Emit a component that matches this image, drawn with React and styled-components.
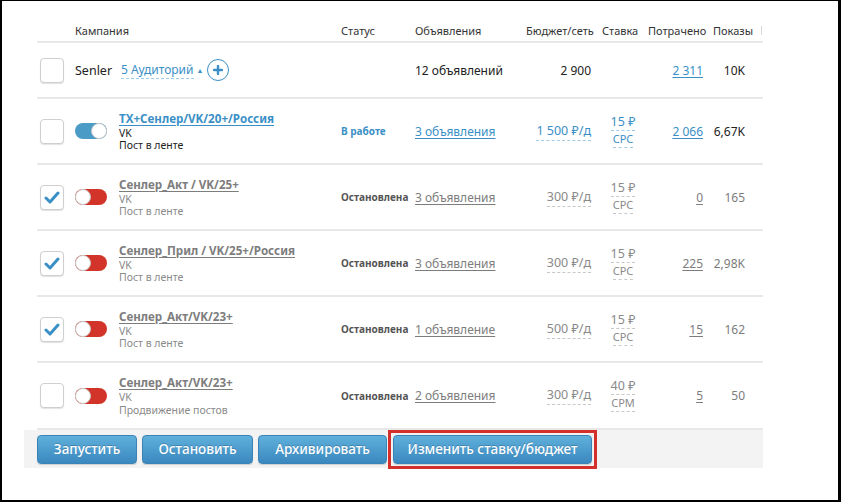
import React from 'react'
import styled, { createGlobalStyle, css } from 'styled-components'

const GlobalStyle = createGlobalStyle`
  html, body {
    margin: 0;
    padding: 0;
    background: #fff;
  }
  body {
    font-family: "Noto Sans", "Open Sans", sans-serif;
    color: #222;
  }
`

const BLUE = '#3a90c6'
const GRAY = '#8a8a8a'
const COLS = '38px 266px 74px 105px 80px 46px 62px 55px'

const Frame = styled.div`
  width: 841px;
  height: 502px;
  box-sizing: border-box;
  border-style: solid;
  border-color: #000;
  border-width: 1px 3px 2px 2px;
  padding: 19px 0 0 22px;
  background: #fff;
`

const Table = styled.div`
  width: 739px;
  display: flex;
  flex-direction: column;
`

const HeadRow = styled.div`
  margin-left: 13px;
  display: grid;
  grid-template-columns: ${COLS};
  height: 23px;
  box-sizing: border-box;
  border-bottom: 2px solid #e8e8e8;
  align-items: center;
  font-size: 11px;
  color: #333;
`

const HeadCell = styled.div`
  padding-left: ${({ $pl }) => $pl || 0}px;
  white-space: nowrap;
  ${({ $bar }) =>
    $bar &&
    css`
      display: flex;
      align-items: center;
      &::after {
        content: '';
        width: 1px;
        height: 9px;
        margin-left: 8px;
        background: #d8d8d8;
      }
    `}
`

const Row = styled.div`
  margin-left: 13px;
  display: grid;
  grid-template-columns: ${COLS};
  height: ${({ $h }) => $h}px;
  box-sizing: border-box;
  border-bottom: 2px solid #e8e8e8;
  align-items: center;
  font-size: 12px;
`

const Cell = styled.div`
  display: flex;
  align-items: center;
  justify-content: ${({ $align }) =>
    $align === 'right' ? 'flex-end' : $align === 'center' ? 'center' : 'flex-start'};
  padding-right: ${({ $pr }) => $pr || 0}px;
  white-space: nowrap;
  color: ${({ $color }) => $color || 'inherit'};
`

const Check = styled.div`
  width: 24px;
  height: 25px;
  margin-left: 3px;
  box-sizing: border-box;
  border: 1px solid #cfcfcf;
  border-radius: 4px;
  background: #fff;
  box-shadow: 0 1px 1px rgba(0, 0, 0, 0.12);
  display: flex;
  align-items: center;
  justify-content: center;
`

const Toggle = styled.div`
  width: 32px;
  height: 16px;
  border-radius: 8px;
  background: ${({ $on }) => ($on ? '#4a9bc6' : '#d23429')};
  display: flex;
  justify-content: ${({ $on }) => ($on ? 'flex-end' : 'flex-start')};
  flex-shrink: 0;
`

const Knob = styled.div`
  width: 16px;
  height: 16px;
  box-sizing: border-box;
  border-radius: 50%;
  background: #fff;
  border: 1px solid #c8c8c8;
`

const CampaignBox = styled.div`
  display: flex;
  align-items: center;
  gap: 12px;
`

const NameBlock = styled.div`
  display: flex;
  flex-direction: column;
`

const Name = styled.a`
  font-size: 11.6px;
  font-weight: 700;
  color: ${({ $on }) => ($on ? BLUE : '#7d7d7d')};
  text-decoration: underline;
  text-underline-offset: 2px;
  margin-bottom: 1px;
  line-height: 15px;
`

const Sub = styled.span`
  font-size: 10.5px;
  line-height: 12.5px;
  color: ${({ $on }) => ($on ? '#222' : GRAY)};
`

const Status = styled.span`
  font-size: 10px;
  font-weight: 700;
  color: ${({ $on }) => ($on ? BLUE : '#555')};
`

const Link = styled.a`
  color: ${({ $on }) => ($on ? BLUE : '#7d7d7d')};
  text-decoration: underline;
  text-underline-offset: 2px;
`

const Dashed = styled.span`
  color: ${({ $on }) => ($on ? BLUE : GRAY)};
  border-bottom: 1px dashed ${({ $on }) => ($on ? '#9fcbe6' : '#c8c8c8')};
  padding-bottom: 1px;
  font-size: 12.5px;
`

const Rate = styled.div`
  display: flex;
  flex-direction: column;
  align-items: center;
  color: ${({ $on }) => ($on ? BLUE : GRAY)};
  line-height: 14px;
`

const RateVal = styled.span`
  font-size: 12.5px;
  border-bottom: 1px dashed ${({ $on }) => ($on ? '#9fcbe6' : '#c8c8c8')};
  padding-bottom: 1px;
`

const RateModel = styled.span`
  font-size: 11px;
  border-bottom: 1px dashed ${({ $on }) => ($on ? '#9fcbe6' : '#c8c8c8')};
  padding: 1px 0 1px;
`

const Senler = styled.span`
  font-size: 12.5px;
  margin-right: 9px;
`

const Audience = styled.span`
  font-size: 12px;
  color: ${BLUE};
  border-bottom: 1px dashed #9fcbe6;
  line-height: 16px;
`

const Caret = styled.span`
  font-size: 7px;
  color: ${BLUE};
  margin: 0 4px 0 3px;
`

const PlusBtn = styled.div`
  width: 22px;
  height: 22px;
  box-sizing: border-box;
  border-radius: 50%;
  border: 1.5px solid ${BLUE};
  display: flex;
  align-items: center;
  justify-content: center;
`

const Footer = styled.div`
  height: 38px;
  box-sizing: border-box;
  background: #f3f3f3;
  display: flex;
  align-items: center;
  gap: 5px;
  padding-left: 13px;
`

const Button = styled.button`
  width: ${({ $w }) => $w}px;
  height: 29px;
  padding: 0;
  border: 1px solid #3983b6;
  border-radius: 4px;
  background: linear-gradient(#60b0dc, #3a88bf);
  color: #fff;
  font-family: inherit;
  font-size: 13.5px;
  font-weight: 500;
  text-shadow: 0 -1px 0 rgba(0, 0, 0, 0.2);
  box-shadow: 0 1px 1px rgba(0, 0, 0, 0.15);
`

const Highlight = styled.div`
  margin-left: -4px;
  border: 3px solid #d3302b;
  padding: 2px;
  display: flex;
`

const CheckMark = () => (
  <svg width="16" height="13" viewBox="0 0 16 13">
    <polyline points="2,7 6,11 14,2" fill="none" stroke="#3a90c6" strokeWidth="3" strokeLinecap="round" strokeLinejoin="round" />
  </svg>
)

const PlusIcon = () => (
  <svg width="10" height="10" viewBox="0 0 10 10">
    <path d="M5 1v8M1 5h8" stroke="#3a90c6" strokeWidth="2.4" strokeLinecap="round" />
  </svg>
)

const campaigns = [
  { on: true, checked: false, name: 'ТХ+Сенлер/VK/20+/Россия', type: 'Пост в ленте', ads: '3 объявления', budget: '1 500 ₽/д', rate: '15 ₽', model: 'CPC', spent: '2 066', shows: '6,67K' },
  { on: false, checked: true, name: 'Сенлер_Акт / VK/25+', type: 'Пост в ленте', ads: '3 объявления', budget: '300 ₽/д', rate: '15 ₽', model: 'CPC', spent: '0', shows: '165' },
  { on: false, checked: true, name: 'Сенлер_Прил / VK/25+/Россия', type: 'Пост в ленте', ads: '3 объявления', budget: '300 ₽/д', rate: '15 ₽', model: 'CPC', spent: '225', shows: '2,98K' },
  { on: false, checked: true, name: 'Сенлер_Акт/VK/23+', type: 'Пост в ленте', ads: '1 объявление', budget: '500 ₽/д', rate: '15 ₽', model: 'CPC', spent: '15', shows: '162' },
  { on: false, checked: false, name: 'Сенлер_Акт/VK/23+', type: 'Продвижение постов', ads: '2 объявления', budget: '300 ₽/д', rate: '40 ₽', model: 'CPM', spent: '5', shows: '50', last: true },
]

function CampaignRow({ c }) {
  return (
    <Row $h={c.last ? 67 : 66}>
      <Cell>
        <Check>{c.checked && <CheckMark />}</Check>
      </Cell>
      <Cell>
        <CampaignBox>
          <Toggle $on={c.on}>
            <Knob />
          </Toggle>
          <NameBlock>
            <Name $on={c.on}>{c.name}</Name>
            <Sub $on={c.on}>VK</Sub>
            <Sub $on={c.on}>{c.type}</Sub>
          </NameBlock>
        </CampaignBox>
      </Cell>
      <Cell>
        <Status $on={c.on}>{c.on ? 'В работе' : 'Остановлена'}</Status>
      </Cell>
      <Cell>
        <Link $on={c.on}>{c.ads}</Link>
      </Cell>
      <Cell $align="right" $pr={9}>
        <Dashed $on={c.on}>{c.budget}</Dashed>
      </Cell>
      <Cell $align="center">
        <Rate $on={c.on}>
          <RateVal $on={c.on}>{c.rate}</RateVal>
          <RateModel $on={c.on}>{c.model}</RateModel>
        </Rate>
      </Cell>
      <Cell $align="right" $pr={5}>
        <Link $on={c.on}>{c.spent}</Link>
      </Cell>
      <Cell $align="right" $pr={18} $color={c.on ? '#222' : '#7d7d7d'}>
        {c.shows}
      </Cell>
    </Row>
  )
}

export default function App() {
  return (
    <>
      <GlobalStyle />
      <Frame>
        <Table>
          <HeadRow>
            <HeadCell />
            <HeadCell>Кампания</HeadCell>
            <HeadCell>Статус</HeadCell>
            <HeadCell>Объявления</HeadCell>
            <HeadCell $pl={6}>Бюджет/сеть</HeadCell>
            <HeadCell $pl={2}>Ставка</HeadCell>
            <HeadCell $pl={2}>Потрачено</HeadCell>
            <HeadCell $pl={5} $bar>Показы</HeadCell>
          </HeadRow>
          <Row $h={56}>
            <Cell>
              <Check />
            </Cell>
            <Cell>
              <Senler>Senler</Senler>
              <Audience>5 Аудиторий</Audience>
              <Caret>▲</Caret>
              <PlusBtn>
                <PlusIcon />
              </PlusBtn>
            </Cell>
            <Cell />
            <Cell>12 объявлений</Cell>
            <Cell $align="right" $pr={9}>2 900</Cell>
            <Cell />
            <Cell $align="right" $pr={5}>
              <Link $on>2 311</Link>
            </Cell>
            <Cell $align="right" $pr={18}>10K</Cell>
          </Row>
          {campaigns.map((c, i) => (
            <CampaignRow key={i} c={c} />
          ))}
          <Footer>
            <Button $w={100}>Запустить</Button>
            <Button $w={111}>Остановить</Button>
            <Button $w={129}>Архивировать</Button>
            <Highlight>
              <Button $w={199}>Изменить ставку/бюджет</Button>
            </Highlight>
          </Footer>
        </Table>
      </Frame>
    </>
  )
}
